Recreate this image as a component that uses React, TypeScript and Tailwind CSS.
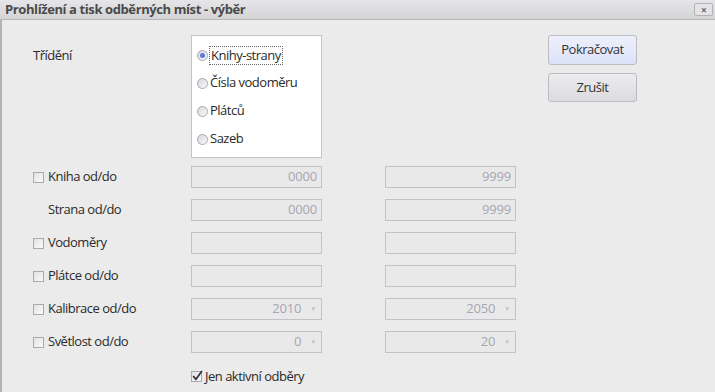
import React from 'react'

const FONT = { fontFamily: '"Open Sans", "Noto Sans", "Liberation Sans", sans-serif' }

const SORTS = ['Knihy-strany', 'Čísla vodoměru', 'Plátců', 'Sazeb']

type Row = { label: string; check: boolean; from: string; to: string; select?: boolean }

const ROWS: Row[] = [
  { label: 'Kniha od/do', check: true, from: '0000', to: '9999' },
  { label: 'Strana od/do', check: false, from: '0000', to: '9999' },
  { label: 'Vodoměry', check: true, from: '', to: '' },
  { label: 'Plátce od/do', check: true, from: '', to: '' },
  { label: 'Kalibrace od/do', check: true, from: '2010', to: '2050', select: true },
  { label: 'Světlost od/do', check: true, from: '0', to: '20', select: true },
]

function Box({ checked = false }: { checked?: boolean }) {
  return (
    <span className="relative inline-block w-[11px] h-[11px] border border-[#a9a9b0] bg-gradient-to-br from-[#e2e2e6] to-[#fafafa]">
      {checked && (
        <svg viewBox="0 0 11 11" className="absolute left-[-1px] top-[-2px] w-[12px] h-[12px]">
          <path d="M2 5.5 L4.5 8.5 L10 1" fill="none" stroke="#333" strokeWidth="1.6" />
        </svg>
      )}
    </span>
  )
}

function Radio({ checked = false }: { checked?: boolean }) {
  return (
    <span className="inline-flex items-center justify-center w-[11px] h-[11px] rounded-full border border-[#a8a8b0] bg-gradient-to-br from-[#d6d6dc] to-[#fbfbfb]">
      {checked && <span className="w-[5px] h-[5px] rounded-full bg-[#5a78d4]" />}
    </span>
  )
}

function Field({ value, select }: { value: string; select?: boolean }) {
  return (
    <div className="w-[131px] h-[22px] border border-[#c2c2c8] bg-[#e9e9e9] flex items-center justify-end pr-[4px] text-[13px] tracking-[-0.2px] text-[#a6a6b2]">
      <span>{value}</span>
      {select && <span className="ml-[9px] mr-[1px] text-[6px] text-[#c0c0c8]">▼</span>}
    </div>
  )
}

export default function App() {
  return (
    <div className="w-[715px] h-[392px] overflow-hidden bg-[#ebebeb] text-[#2a2a2a] text-[13px] tracking-[-0.5px]" style={FONT}>
      <div className="h-[20px] flex items-center justify-between pl-[5px] pr-[2px] border-b border-[#b8b8bc] bg-gradient-to-b from-[#e6e6e8] to-[#d4d4d6]">
        <span className="font-bold text-[13px] text-[#4a4a4a] tracking-[-0.4px]">Prohlížení a tisk odběrných míst - výběr</span>
        <span className="w-[19px] h-[13px] border border-[#b4b4b8] rounded-[2px] bg-[#e4e4e6] flex items-center justify-center text-[10px] leading-none text-[#666] font-bold">×</span>
      </div>
      <div className="border-l-2 border-[#b4b4b6] h-[372px] pl-[31px] pt-[15px]">
        <div className="flex">
          <div className="w-[158px] pt-[11px]">Třídění</div>
          <div className="w-[131px] h-[123px] border border-[#c4c4cc] bg-white pt-[9px] pl-[5px] flex flex-col gap-[8px]">
            {SORTS.map((s, i) => (
              <div key={s} className="flex items-center h-[20px]">
                <Radio checked={i === 0} />
                <span className={i === 0 ? 'ml-[1px] border border-dotted border-[#666] pl-[1px] pr-[1px] leading-[17px]' : 'ml-[2px]'}>{s}</span>
              </div>
            ))}
          </div>
          <div className="ml-[226px] flex flex-col gap-[8px]">
            <button className="w-[89px] h-[30px] rounded-[3px] border border-[#bcbcc4] bg-gradient-to-b from-[#eef0fb] to-[#dce2fa] text-[#333]">Pokračovat</button>
            <button className="w-[89px] h-[29px] rounded-[3px] border border-[#bcbcc0] bg-gradient-to-b from-[#ececee] to-[#dcdce0] text-[#333]">Zrušit</button>
          </div>
        </div>
        <div className="mt-[8px] flex flex-col gap-[11px]">
          {ROWS.map(r => (
            <div key={r.label} className="flex items-center h-[22px]">
              <div className="w-[158px] flex items-center gap-[3px]">
                {r.check ? <Box /> : <span className="w-[11px]" />}
                <span className="ml-[1px]">{r.label}</span>
              </div>
              <Field value={r.from} select={r.select} />
              <div className="ml-[63px]">
                <Field value={r.to} select={r.select} />
              </div>
            </div>
          ))}
        </div>
        <div className="mt-[14px] ml-[158px] flex items-center gap-[3px]">
          <Box checked />
          <span>Jen aktivní odběry</span>
        </div>
      </div>
    </div>
  )
}
